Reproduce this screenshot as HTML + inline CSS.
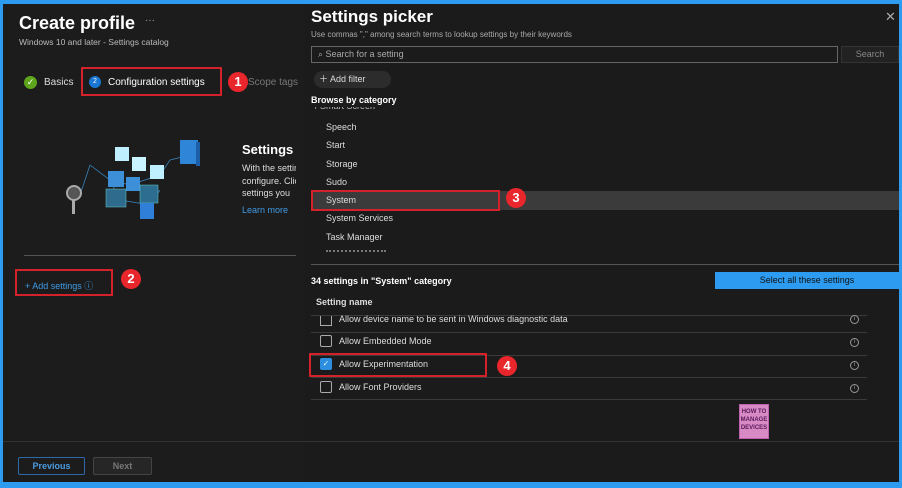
<!DOCTYPE html>
<html><head><style>
*{margin:0;padding:0;box-sizing:border-box}
body{width:902px;height:488px;background:#2d9bf0;font-family:"Liberation Sans",sans-serif;overflow:hidden;position:relative}
.main{position:absolute;left:3px;top:4px;width:896px;height:478px;background:#1c1c1c}
.a{position:absolute;white-space:nowrap}
.badge{position:absolute;width:20px;height:20px;border-radius:50%;background:#e8262b;color:#fff;font-weight:bold;font-size:13px;text-align:center;line-height:20px}
.red{position:absolute;border:2px solid #d3222a}
.cb{position:absolute;width:12px;height:12px;border:1px solid #aaa;border-radius:2px}
.info{position:absolute;width:9px;height:9px;border:1px solid #999;border-radius:50%;font-size:6px;color:#999;text-align:center;line-height:7px}
.cat{position:absolute;left:326px;font-size:9px;color:#ddd}
</style></head><body>
<div class="main"></div>
<div class="a" style="left:19px;top:13px;font-size:18px;color:#fff;font-weight:bold">Create profile</div>
<div class="a" style="left:145px;top:15px;font-size:10px;color:#aaa">···</div>
<div class="a" style="left:19px;top:37px;font-size:8.5px;color:#bbb">Windows 10 and later - Settings catalog</div>
<div class="a" style="left:24px;top:76px;width:13px;height:13px;border-radius:50%;background:#5ea51c;color:#fff;font-size:9px;text-align:center;line-height:13px">✓</div>
<div class="a" style="left:44px;top:77px;font-size:10px;color:#ddd">Basics</div>
<div class="a" style="left:89px;top:76px;width:12px;height:12px;border-radius:50%;background:#1976d2;color:#fff;font-size:7px;text-align:center;line-height:12px">2</div>
<div class="a" style="left:108px;top:77px;font-size:10px;color:#fff">Configuration settings</div>
<div class="red" style="left:81px;top:67px;width:141px;height:29px"></div>
<div class="a" style="left:248px;top:77px;font-size:10px;color:#777">Scope tags</div>
<div class="badge" style="left:228px;top:72px">1</div>
<svg class="a" style="left:60px;top:135px" width="150" height="90">
<g stroke="#3a8fd0" stroke-width="0.7" fill="none"><path d="M30 30 L50 45 L70 50 L100 40 L110 25 L130 20 M30 30 L20 60 M50 45 L60 65 L90 70 L100 55"/></g>
<rect x="55" y="12" width="14" height="14" fill="#bfefff"/><rect x="72" y="22" width="14" height="14" fill="#c9f3ff"/><rect x="90" y="30" width="14" height="14" fill="#bff0ff"/>
<rect x="48" y="36" width="16" height="16" fill="#3d8fd8"/><rect x="66" y="42" width="14" height="14" fill="#3d8fd8"/><rect x="46" y="54" width="20" height="18" fill="#2f6b8c" stroke="#6cc" stroke-width="0.5"/><rect x="80" y="50" width="18" height="18" fill="#2d6e90" stroke="#6cc" stroke-width="0.5"/><rect x="80" y="68" width="14" height="16" fill="#2f7ed8"/>
<rect x="120" y="5" width="18" height="24" fill="#2f86d8"/><rect x="136" y="7" width="4" height="24" fill="#1b5fa8"/>
<circle cx="14" cy="58" r="7" fill="#555" stroke="#aaa" stroke-width="2"/><rect x="12" y="65" width="3" height="14" fill="#aaa"/>
</svg>
<div class="a" style="left:242px;top:142px;font-size:13px;color:#fff;font-weight:bold">Settings</div>
<div style="position:absolute;left:242px;top:162px;width:54px;overflow:hidden;font-size:9px;color:#ddd;line-height:12.5px;white-space:nowrap">With the settings<br>configure. Click<br>settings you</div>
<div class="a" style="left:242px;top:205px;font-size:9px;color:#3f9be6">Learn more</div>
<div class="a" style="left:24px;top:255px;width:272px;height:1px;background:#555"></div>
<div class="a" style="left:25px;top:279px;font-size:9px;color:#3f9be6">+ Add settings ⓘ</div>
<div class="red" style="left:15px;top:269px;width:98px;height:27px"></div>
<div class="badge" style="left:121px;top:269px">2</div>
<div class="a" style="left:3px;top:441px;width:302px;height:1px;background:#333"></div>
<div class="a" style="left:18px;top:457px;width:67px;height:18px;border:1px solid #2f6aa8;border-radius:2px;color:#4b9be0;font-size:9px;font-weight:bold;text-align:center;line-height:16px">Previous</div>
<div class="a" style="left:93px;top:457px;width:59px;height:18px;border:1px solid #444;background:#262626;border-radius:2px;color:#777;font-size:9px;font-weight:bold;text-align:center;line-height:16px">Next</div>

<div class="a" style="left:305px;top:4px;width:594px;height:478px;background:#1b1b1b"></div>
<div class="a" style="left:311px;top:7px;font-size:17px;color:#fff;font-weight:bold">Settings picker</div>
<div class="a" style="left:885px;top:9px;font-size:13px;color:#aaa">✕</div>
<div class="a" style="left:311px;top:30px;font-size:8px;color:#aaa">Use commas "," among search terms to lookup settings by their keywords</div>
<div class="a" style="left:311px;top:46px;width:527px;height:17px;border:1px solid #666;font-size:9px;color:#aaa;padding-left:6px;line-height:15px">⌕ Search for a setting</div>
<div class="a" style="left:841px;top:46px;width:58px;height:17px;border:1px solid #333;background:#222;font-size:9px;color:#888;text-align:center;line-height:15px">Search</div>
<div class="a" style="left:314px;top:71px;width:77px;height:17px;border-radius:9px;background:#2c2c2c;font-size:9px;color:#ddd;line-height:17px;padding-left:5px">＋ Add filter</div>
<div class="a" style="left:311px;top:95px;font-size:9px;color:#fff;font-weight:bold">Browse by category</div>
<div class="a" style="left:311px;top:107px;width:200px;height:5px;overflow:hidden"><div style="font-size:9px;color:#bbb;margin-top:-6px;padding-left:4px">/ Smart Screen</div></div>
<div class="cat" style="top:122px">Speech</div>
<div class="cat" style="top:140px">Start</div>
<div class="cat" style="top:159px">Storage</div>
<div class="cat" style="top:177px">Sudo</div>
<div class="a" style="left:311px;top:191px;width:588px;height:19px;background:#3b3b3b"></div>
<div class="cat" style="top:195px">System</div>
<div class="red" style="left:311px;top:190px;width:189px;height:21px"></div>
<div class="badge" style="left:506px;top:188px">3</div>
<div class="cat" style="top:213px">System Services</div>
<div class="cat" style="top:232px">Task Manager</div>
<div class="a" style="left:326px;top:250px;width:60px;height:3px;border-top:2px dotted #777"></div>
<div class="a" style="left:311px;top:264px;width:588px;height:1px;background:#555"></div>
<div class="a" style="left:311px;top:276px;font-size:9px;color:#fff;font-weight:bold">34 settings in "System" category</div>
<div class="a" style="left:715px;top:272px;width:184px;height:17px;background:#2d9bf0;color:#111;font-size:9px;text-align:center;line-height:17px">Select all these settings</div>
<div class="a" style="left:316px;top:297px;font-size:9px;color:#ddd;font-weight:bold">Setting name</div>
<div class="a" style="left:311px;top:315px;width:556px;height:1px;background:#3a3a3a"></div>
<div class="a" style="left:311px;top:332px;width:556px;height:1px;background:#3a3a3a"></div>
<div class="a" style="left:311px;top:355px;width:556px;height:1px;background:#3a3a3a"></div>
<div class="a" style="left:311px;top:377px;width:556px;height:1px;background:#3a3a3a"></div>
<div class="a" style="left:311px;top:399px;width:556px;height:1px;background:#3a3a3a"></div>
<div class="a" style="left:320px;top:316px;width:12px;height:10px;border:1px solid #aaa;border-top:none"></div>
<div class="a" style="left:339px;top:314px;font-size:9px;color:#ddd">Allow device name to be sent in Windows diagnostic data</div>
<div class="cb" style="left:320px;top:335px"></div>
<div class="a" style="left:339px;top:336px;font-size:9px;color:#ddd">Allow Embedded Mode</div>
<div class="cb" style="left:320px;top:358px;background:#2d8ee0;border-color:#2d8ee0;color:#dff;font-size:8px;text-align:center;line-height:10px">✓</div>
<div class="a" style="left:339px;top:359px;font-size:9px;color:#ddd">Allow Experimentation</div>
<div class="red" style="left:309px;top:353px;width:178px;height:24px"></div>
<div class="badge" style="left:497px;top:356px">4</div>
<div class="cb" style="left:320px;top:381px"></div>
<div class="a" style="left:339px;top:382px;font-size:9px;color:#ddd">Allow Font Providers</div>
<div class="info" style="left:850px;top:315px">i</div>
<div class="info" style="left:850px;top:338px">i</div>
<div class="info" style="left:850px;top:361px">i</div>
<div class="info" style="left:850px;top:384px">i</div>
<div class="a" style="left:739px;top:404px;width:30px;height:35px;background:#d78ac4;border:1px solid #c060b0;font-size:6px;color:#5a1a5a;font-weight:bold;text-align:center;line-height:8px;padding-top:3px">HOW TO<br>MANAGE<br>DEVICES</div>
<div class="a" style="left:305px;top:441px;width:594px;height:1px;background:#333"></div>
</body></html>
